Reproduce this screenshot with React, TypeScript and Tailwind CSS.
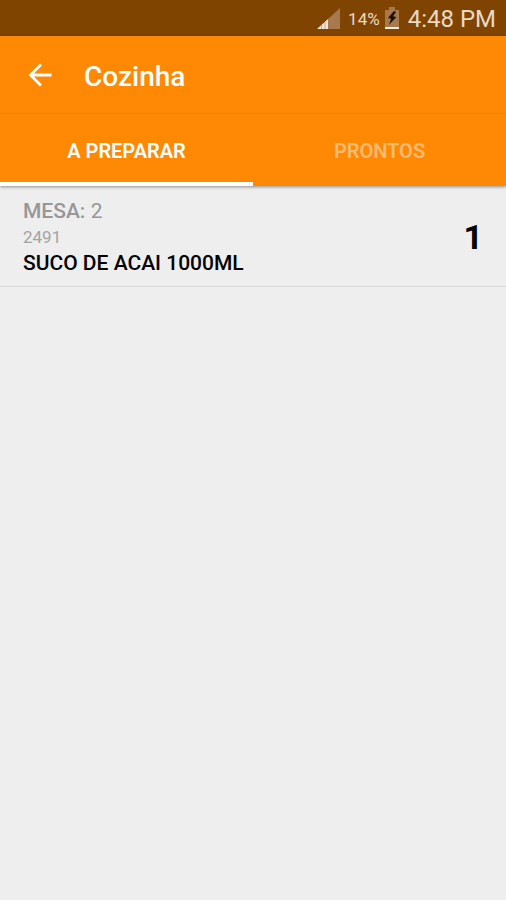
import { useState } from 'react';
import clsx from 'clsx';

type Tab = 'preparar' | 'prontos';

interface Order {
  id: number;
  table: number;
  product: string;
  quantity: number;
}

const tabs: { id: Tab; label: string }[] = [
  { id: 'preparar', label: 'A PREPARAR' },
  { id: 'prontos', label: 'PRONTOS' },
];

const orders: Record<Tab, Order[]> = {
  preparar: [{ id: 2491, table: 2, product: 'SUCO DE ACAI 1000ML', quantity: 1 }],
  prontos: [],
};

function StatusBar() {
  return (
    <div className="flex h-9 items-center justify-end bg-[#7f4400] pr-2.5 pt-0.5 text-[#ecd9c6]">
      {/* Signal */}
      <svg className="mr-2 h-6 w-6" viewBox="0 0 24 24" aria-hidden="true">
        <path d="M1 22 L12 12 V22 Z" fill="#f3e6d9" />
        <path d="M12 12 L24 1 V22 H12 Z" fill="#a8794c" />
        <path d="M5.5 18 V22 M9 15 V22" stroke="#a8794c" strokeWidth="0.6" />
      </svg>
      <span className="text-[17px] leading-6">14%</span>
      {/* Battery */}
      <svg className="ml-1 mr-2 h-6 w-4" viewBox="0 0 16 24" aria-hidden="true">
        <path d="M5 0 H11 V3 H15 V20 H1 V3 H5 Z" fill="#a8794c" />
        <path d="M1 20 H15 V22 H1 Z" fill="#f7e9dc" />
        <path d="M10 4 L4 11 L7.2 11.8 L4.8 18 L12.4 10 L9 9.2 L12 5 Z" fill="#1c0f00" />
      </svg>
      <span className="text-2xl leading-8">4:48 PM</span>
    </div>
  );
}

function Toolbar() {
  return (
    <div className="flex h-[78px] items-center border-b border-[#f58205] px-6 pt-0.5">
      <button type="button" aria-label="Voltar" className="flex h-8 w-8 items-center justify-center">
        <svg className="h-8 w-8" viewBox="0 0 32 32" fill="none" stroke="currentColor" strokeWidth="2.8" aria-hidden="true">
          <path d="M27.5 15 H6.5 M17 4.5 L6.5 15 L17 25.5" />
        </svg>
      </button>
      <h1 className="ml-7 pt-0.5 text-[28px] font-medium leading-9">Cozinha</h1>
    </div>
  );
}

function OrderRow({ order }: { order: Order }) {
  return (
    <li className="flex items-center justify-between border-b border-[#d8d8d8] px-[23px] pb-2.5 pt-3">
      <div>
        <p className="text-[21px] leading-[26px] text-[#979797]">
          <span className="font-medium">MESA:</span> {order.table}
        </p>
        <p className="text-[17px] leading-[26px] text-[#a3a3a3]">{order.id}</p>
        <p className="text-[21px] font-medium leading-[26px] text-black">{order.product}</p>
      </div>
      <span className="text-[34px] font-bold leading-10 text-black">{order.quantity}</span>
    </li>
  );
}

export default function App() {
  const [active, setActive] = useState<Tab>('preparar');

  return (
    <div className="min-h-screen bg-[#eeeeee] font-['Roboto',sans-serif]">
      <StatusBar />

      <header className="bg-[#ff8905] text-white shadow-[0_1px_3px_rgba(0,0,0,0.4)]">
        <Toolbar />
        <div role="tablist" className="flex h-[72px]">
          {tabs.map((tab) => (
            <button
              key={tab.id}
              type="button"
              role="tab"
              aria-selected={active === tab.id}
              onClick={() => setActive(tab.id)}
              className={clsx(
                'flex-1 border-b-4 pt-1.5 text-xl font-semibold',
                active === tab.id ? 'border-white text-white' : 'border-transparent text-[#ffbb70]'
              )}
            >
              {tab.label}
            </button>
          ))}
        </div>
      </header>

      <ul>
        {orders[active].map((order) => (
          <OrderRow key={order.id} order={order} />
        ))}
      </ul>
    </div>
  );
}
